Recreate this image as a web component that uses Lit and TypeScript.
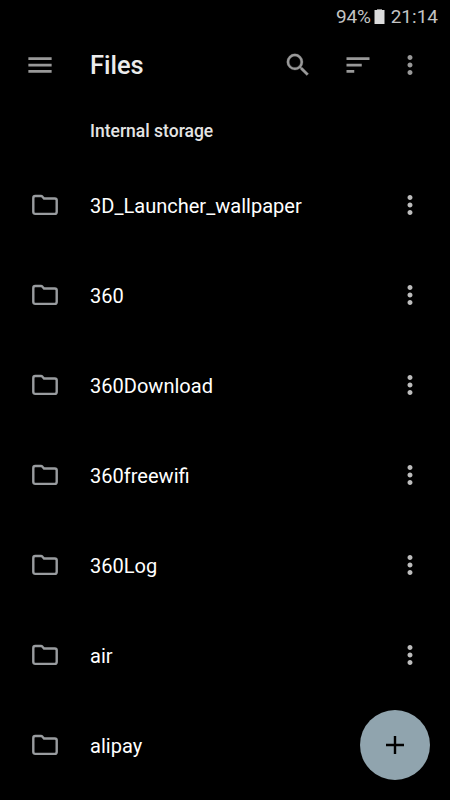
import { LitElement, html, css, svg } from "lit";
import { customElement } from "lit/decorators.js";

const paths: Record<string, string> = {
  menu: "M2.7 18.2h18.6V16H2.7v2.2zm0-5.1h18.6v-2.2H2.7v2.2zm0-7.3V8h18.6V5.8H2.7z",
  search: "M15.5 14h-.79l-.28-.27A6.471 6.471 0 0 0 16 9.5 6.5 6.5 0 1 0 9.5 16c1.61 0 3.09-.59 4.23-1.57l.27.28v.79l5 4.99L20.49 19l-4.99-5zm-6 0C7.01 14 5 11.99 5 9.5S7.01 5 9.5 5 14 7.01 14 9.5 11.99 14 9.5 14z",
  sort: "M2.8 18.2H9V16H2.8v2.2zM2.8 5.8V8h18.4V5.8H2.8zm0 7.3H15v-2.2H2.8v2.2z",
  more: "M12 8c1.1 0 2-.9 2-2s-.9-2-2-2-2 .9-2 2 .9 2 2 2zm0 2c-1.1 0-2 .9-2 2s.9 2 2 2 2-.9 2-2-.9-2-2-2zm0 6c-1.1 0-2 .9-2 2s.9 2 2 2 2-.9 2-2-.9-2-2-2z",
  add: "M21 13.2h-7.8V21h-2.4v-7.8H3v-2.4h7.8V3h2.4v7.8H21z",
};
const icon = (name: string, cls = "") =>
  html`<svg class="icon ${cls}" viewBox="0 0 24 24">${svg`<path d=${paths[name]}></path>`}</svg>`;
const folderIcon = html`<svg class="icon folder" viewBox="0 0 30 30"><path d="M5.3 6H10.9C11.6 6 12 6.200 12.5 6.8L14 8.5H24.8C25.9 8.5 26.7 9.2 26.7 10.3V22C26.7 23.2 26 23.9 24.8 23.9H5.3C4.1 23.9 3.3 23.2 3.3 22V8C3.3 6.8 4.1 6 5.3 6Z"></path></svg>`;

const folders = ["3D_Launcher_wallpaper", "360", "360Download", "360freewifi", "360Log", "air", "alipay"];

@customElement("app-root")
export class AppRoot extends LitElement {
  static styles = css`
    :host { display: block; position: relative; width: 450px; height: 800px; overflow: hidden; background: #000; color: #fff; font-family: Roboto, sans-serif; }
    .status { height: 32px; box-sizing: border-box; padding-right: 12px; display: flex; justify-content: flex-end; align-items: center; font-size: 19px; color: #c4c4c4; }
    .level { letter-spacing: -0.2px; }
    .battery { width: 11px; height: 15px; margin: 0 6px 0 3px; fill: #dcdcdc; }
    .terminal { fill: #8a8a8a; }
    .bar { height: 66px; display: grid; grid-template-columns: 90px 1fr 60px 60px 45px 17.5px; align-items: center; }
    .bar .icon, .row .icon { justify-self: center; }
    .title { font-size: 25.4px; font-weight: 500; color: #ececec; }
    .icon { width: 30px; height: 30px; fill: #999; display: block; }
    .menu { margin-right: 10px; }
    .search { stroke: #999; stroke-width: 0.2; }
    .section { height: 62px; padding: 0 0 0 90px; line-height: 66px; font-size: 17.5px; font-weight: 500; color: #e4e4e4; }
    .row { height: 90px; display: grid; grid-template-columns: 90px 1fr 80px; align-items: center; font-size: 20.05px; }
    .name { padding-top: 2px; }
    .folder { fill: none; stroke: #999c9f; stroke-width: 2.4; }
    .row .more { fill: #bdbdbd; }
    .fab { position: absolute; right: 20px; bottom: 20px; width: 70px; height: 70px; border-radius: 50%; background: #90a4ae; display: grid; place-items: center; }
    .fab .add { width: 24px; height: 24px; fill: #000; }
  `;
  render() {
    return html`
      <div class="status"><span class="level">94%</span><svg class="battery" viewBox="0 0 11 15"><path class="terminal" d="M3 0h5v1H3z"></path><path d="M.5 1h10v14H.5z"></path></svg><span>21:14</span></div>
      <header class="bar">${icon("menu", "menu")}<span class="title">Files</span>${icon("search", "search")}${icon("sort")}${icon("more")}</header>
      <div class="section">Internal storage</div>
      <main>${folders.map((name) => html`<div class="row">${folderIcon}<span class="name">${name}</span>${icon("more", "more")}</div>`)}</main>
      <div class="fab">${icon("add", "add")}</div>
    `;
  }
}
